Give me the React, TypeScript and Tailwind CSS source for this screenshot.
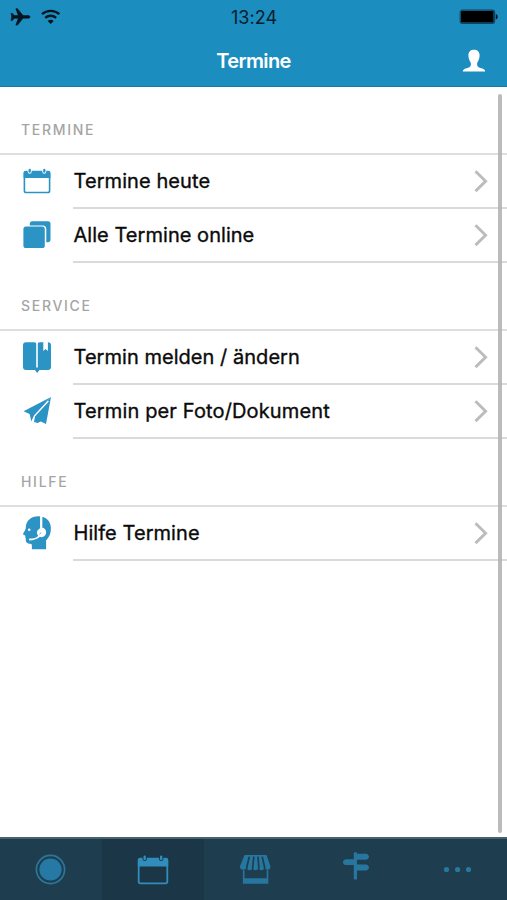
import { useState } from "react";
import type { ReactNode } from "react";
import clsx from "clsx";

const CalendarIcon = () => (
  <svg viewBox="0 0 32 36" className="w-8 h-9" fill="none">
    <rect x="3.4" y="8.9" width="25.200" height="20.6" rx="1.8" stroke="#2c93c5" strokeWidth="1.6" />
    <path d="M2.6 10c0-1.3.9-2.200 2.200-2.200h22.4c1.300 0 2.200.9 2.200 2.200v5H2.600z" fill="#2c93c5" />
    <path d="M8.7 6.2v2.6M23.3 6.2v2.6" stroke="#fff" strokeWidth="4" strokeLinecap="round" />
    <path d="M8.7 6.900v1.800M23.300 6.900v1.800" stroke="#2c93c5" strokeWidth="2.300" strokeLinecap="round" />
  </svg>
);

const StackIcon = () => (
  <svg viewBox="0 0 32 36" className="w-8 h-9" fill="#2c93c5">
    <rect x="8.8" y="4.2" width="20.7" height="21" rx="2.6" />
    <rect x="1.3" y="8.4" width="24" height="24" rx="3.6" fill="#fff" />
    <rect x="2.4" y="9.6" width="21.4" height="21.4" rx="2.6" />
  </svg>
);

const BookIcon = () => (
  <svg viewBox="0 0 32 36" className="w-8 h-9" fill="#2c93c5">
    <path d="M5 3.300h8c1.600 0 2.700.8 3 2 .3-1.200 1.400-2 3-2h8c1.900 0 3 1.100 3 3v21.800c0 1.900-1.100 3-3 3h-8.500L16.200 34l-2.300-2.900H5c-1.900 0-3-1.100-3-3V6.300c0-1.900 1.100-3 3-3z" />
    <path d="M16 4v24.600" stroke="#fff" strokeWidth="1.600" />
    <path d="M22.300 3v9l2.300-1.900 2.300 1.900V3z" fill="#fff" />
  </svg>
);

const PlaneIcon = () => (
  <svg viewBox="0 0 32 36" className="w-8 h-9" fill="#2c93c5">
    <path d="M30 4 2.600 18.200l7 3.200z" />
    <path d="M30 4 8.500 20.600l1.900 8L14 21.500z" />
    <path d="m30 4-5 27.100-5.200-2.500-3.200 1.500-3.600-1.200 1.200-6.900z" />
    <path d="M27.400 8 13.400 23.200l-2.600 6" stroke="#fff" strokeWidth="1.200" fill="none" />
  </svg>
);

const SupportIcon = () => (
  <svg viewBox="0 0 32 36" className="w-8 h-9" fill="#2c93c5">
    <path d="M17.600 1.300C9.800 1.300 4.900 6 4.800 12.800c0 2.200-2.600 5.100-2.700 6.300 0 .9 1.100 1.200 2.200 1.500.2 1.200-.2 2.300.5 3-.5 2.500.6 4.900 3.200 5.100 1.800.1 2.900.1 2.900 1.700v3.800h14.200v-8.800c3.200-3 4.900-7.200 4.800-12.300C29.800 6.400 25.200 1.300 17.600 1.300z" />
    <circle cx="8.200" cy="14.700" r="1.300" fill="#fff" />
    <path d="M20.200 1v12.500" stroke="#fff" strokeWidth="2.300" />
    <path d="M20.600 12.500c2.900.2 4.500 2.200 4.500 4.800 0 2.900-2 4.900-4.600 4.900s-4.600-1.900-4.600-4.600c0-2.300 1.900-3.700 4.700-5.100z" fill="#fff" />
    <path d="M19.500 20c-2.500 2.900-5.700 4.500-10.600 4.500" stroke="#fff" strokeWidth="1.800" strokeLinecap="round" fill="none" />
    <path d="m18.400 19.200 1.800-1.400" stroke="#2c93c5" strokeWidth=".8" />
  </svg>
);

type Item = { label: string; icon: ReactNode; spacing: string };

const sections: { title: string; items: Item[] }[] = [
  {
    title: "TERMINE",
    items: [
      { label: "Termine heute", icon: <CalendarIcon />, spacing: "tracking-[0.08px]" },
      { label: "Alle Termine online", icon: <StackIcon />, spacing: "tracking-[0.04px]" },
    ],
  },
  {
    title: "SERVICE",
    items: [
      { label: "Termin melden / ändern", icon: <BookIcon />, spacing: "tracking-[0.04px]" },
      { label: "Termin per Foto/Dokument", icon: <PlaneIcon />, spacing: "tracking-[0.14px]" },
    ],
  },
  {
    title: "HILFE",
    items: [{ label: "Hilfe Termine", icon: <SupportIcon />, spacing: "tracking-[0.06px]" }],
  },
];

const tabs = [
  {
    name: "home",
    icon: (
      <svg viewBox="0 0 36 36" className="size-9" fill="none">
        <circle cx="17.500" cy="17.500" r="14.100" stroke="#2b769b" strokeWidth="1.700" />
        <circle cx="17.500" cy="17.500" r="11.100" fill="#2779a5" />
      </svg>
    ),
  },
  {
    name: "calendar",
    icon: (
      <svg viewBox="0 0 36 36" className="size-9" fill="none">
        <rect x="3.700" y="7" width="28.600" height="24.300" rx="1.800" stroke="#318dbb" strokeWidth="1.800" />
        <path d="M2.800 8c0-1.300.9-2.200 2.200-2.200h26c1.300 0 2.200.9 2.200 2.200v6.400H2.800z" fill="#318dbb" />
        <path d="M9.700 4.400v2.400M26.200 4.400v2.400" stroke="#1a3647" strokeWidth="4.400" strokeLinecap="round" />
        <path d="M9.700 4.700v2.200M26.200 4.700v2.200" stroke="#318dbb" strokeWidth="2.400" strokeLinecap="round" />
      </svg>
    ),
  },
  {
    name: "shop",
    icon: (
      <svg viewBox="0 0 36 36" className="size-9" fill="#27769f">
        <path d="M7.500 3h22l4 11.600c0 4.200-5 4.200-6 .6 0 4-6 4-6 0 0 4-6 4-6 0 0 4-6 4-6 0-1 3.600-6.600 3.600-6.600-.6z" />
        <path d="m12.300 4.600-2.500 10.600v1.500M16.800 4.600l-1.100 10.600v1.500M21 4.600l.8 10.600v1.500M25.200 4.600l2.400 10.600v1.500" stroke="#1e3e50" strokeWidth="1.700" fill="none" />
        <path d="M5.900 18.200h1.600v8h22.200v-8h1.600v13.600H5.900z" />
      </svg>
    ),
  },
  {
    name: "directions",
    icon: (
      <svg viewBox="0 0 36 36" className="size-9" fill="#27769f">
        <rect x="15.800" y=".2" width="3.200" height="27.400" rx="1.200" />
        <path d="M17.400 1.700h10.400c1.700 0 3.200 1.700 3.200 3s-1.500 3-3.200 3H17.400zM17.400 12.600h10.400c1.700 0 3.200 1.700 3.200 3s-1.500 3-3.200 3H17.400zM17.400 7.300H8.200c-1.700 0-3.300 1.600-3.300 2.900s1.600 2.900 3.300 2.900h9.200z" />
      </svg>
    ),
  },
  {
    name: "more",
    icon: (
      <svg viewBox="0 0 36 36" className="size-9" fill="#27789f">
        <circle cx="7.500" cy="17.500" r="2.600" />
        <circle cx="18.600" cy="17.500" r="2.600" />
        <circle cx="29.500" cy="17.500" r="2.600" />
      </svg>
    ),
  },
];

const StatusBar = () => (
  <div className="grid grid-cols-3 items-center h-[34px] pl-[9px] pr-[8px]">
    <div className="flex items-center gap-[10px]">
      <svg viewBox="0 0 22 20" className="w-[22px] h-5" fill="#051620" stroke="#051620" strokeWidth=".6">
        <path d="M21 9.900c0-.9-.8-1.300-2-1.300h-5L8.500 1.700H6.900l2.400 6.900H5.200L3.500 6.400H2l.8 3.500L2 13.400h1.500l1.700-2.200h4.100l-2.400 6.900h1.600l5.500-6.900h5c1.200 0 2-.4 2-1.300z" />
      </svg>
      <svg viewBox="0 0 20 18" className="w-5 h-[18px]" fill="none" stroke="#051620" strokeWidth="2.300">
        <path d="M1 6.200c5.100-4.500 12.300-4.500 17.400 0" />
        <path d="M4.200 9.900c3.200-2.900 7.800-2.900 11 0" />
        <path d="m9.700 16-3-3.100c1.600-1.600 4.400-1.600 6 0z" fill="#051620" stroke="none" />
      </svg>
    </div>
    <span className="text-center pt-[2px] text-[18px] leading-none tracking-[0.05px] text-[#06202d]">13:24</span>
    <svg viewBox="0 0 40 18" className="w-10 h-[18px] justify-self-end">
      <rect x="1.200" y="2.200" width="34.400" height="13.200" rx="2.400" fill="none" stroke="#0d4560" strokeWidth="1.200" />
      <rect x="2" y="3" width="32.600" height="11.600" rx="1" fill="#000" />
      <path d="M36.800 6.100c2.500.6 2.500 4.900 0 5.500z" fill="#051620" />
    </svg>
  </div>
);

export default function App() {
  const [active, setActive] = useState("calendar");

  return (
    <div className="relative flex flex-col w-[507px] h-[900px] overflow-hidden bg-white font-['Inter',sans-serif]">
      <header className="h-[87px] shrink-0 bg-[#1c8dbf] border-b border-[#1a7aa5]">
        <StatusBar />
        <div className="grid grid-cols-[1fr_auto_1fr] items-center h-[53px] pr-[21px] pl-[21px]">
          <h1 className="col-start-2 text-[20px] leading-none font-semibold tracking-[-0.65px] text-white">
            Termine
          </h1>
          <svg viewBox="0 0 24 24" className="size-6 justify-self-end" fill="#fff">
            <path d="M12 .7c3.400 0 5.600 2 5.600 5.600 0 2-.5 4.300-1.500 5.900-.8 1.200-1 1.900-1 3.200 0 2.300 1.900 3 4.400 3.800 2.300.8 3.500 1.300 3.700 3.300H.8c.2-2 1.400-2.500 3.700-3.300 2.500-.8 4.400-1.500 4.400-3.800 0-1.300-.2-2-1-3.200-1-1.600-1.500-3.900-1.500-5.900C6.400 2.700 8.600.7 12 .7z" />
          </svg>
        </div>
      </header>

      <main className="flex-1">
        {sections.map((section) => (
          <section key={section.title}>
            <h2 className="flex items-center h-[68px] pt-[18px] pl-[21px] border-b-2 border-[#dedede] text-[14px] font-medium tracking-[1.7px] text-[#a5a5a5]">
              {section.title}
            </h2>
            <ul>
              {section.items.map((item) => (
                <li key={item.label} className="flex h-[54px] pl-[21px]">
                  <div className="w-[52px] h-[52px] flex items-center shrink-0">{item.icon}</div>
                  <div className="flex flex-1 items-center justify-between border-b-2 border-[#dadada] pr-[18px]">
                    <span className={clsx("pl-[0.5px] text-[20px] leading-none text-[#0b0b0b] [-webkit-text-stroke:0.35px_#0b0b0b]", item.spacing)}>
                      {item.label}
                    </span>
                    <svg viewBox="0 0 16 24" className="w-4 h-6" fill="none" stroke="#bcbcbc" strokeWidth="2.900">
                      <path d="m2.500 2.300 10.100 9.900-10.100 9.900" />
                    </svg>
                  </div>
                </li>
              ))}
            </ul>
          </section>
        ))}
      </main>

      {/* Scroll indicator */}
      <div className="absolute top-[94px] right-[5px] w-[4px] h-[739px] rounded-full bg-[#b4b4b4]/90" />

      <nav className="grid grid-cols-[102px_102px_101px_101px_101px] h-[63px] shrink-0 border-t-2 border-[#47616e] bg-[#1e3e50]">
        {tabs.map((tab) => (
          <button
            key={tab.name}
            type="button"
            aria-label={tab.name}
            onClick={() => setActive(tab.name)}
            className={clsx("flex items-center justify-center", active === tab.name && "bg-[#1a3647]")}
          >
            {tab.icon}
          </button>
        ))}
      </nav>
    </div>
  );
}
